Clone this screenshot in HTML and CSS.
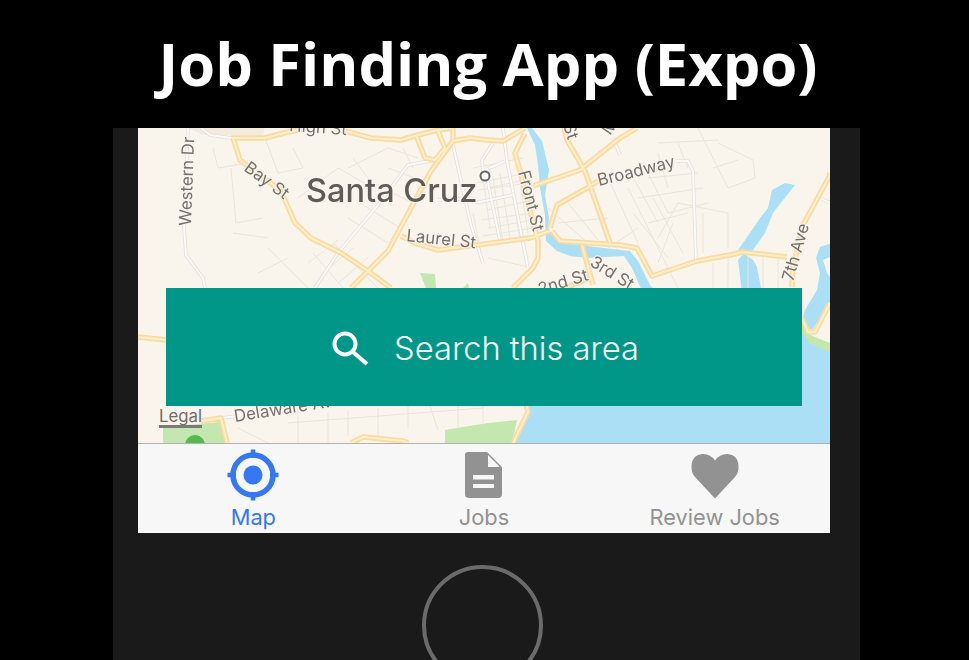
FILE: index.html
```html
<!DOCTYPE html>
<html lang="en">
<head>
<meta charset="utf-8">
<title>Job Finding App (Expo)</title>
<link rel="stylesheet" href="styles.css">
</head>
<body>
<header class="banner"><h1 class="banner-title">Job Finding App (Expo)</h1></header>
<main class="device">
  <section class="screen">
    <div class="map">
      <svg class="map-art" viewBox="0 0 692 315" width="692" height="315">
        <defs>
          <path id="major" d="M93 10L127 10L150 4L170 0M207 3L233 10L263 12L280 7L300 2L315 0M332 10L349 12L365 13L382 3L387 0M315 13L332 10M95 10L102 32L115 42L143 63L157 95L173 110L203 125L230 143L253 160M315 0L315 13L293 43L273 80L250 123L230 143L213 160M263 108L277 115L300 122L339 117L392 110L412 103M278 7L287 30L297 32L307 20L300 3M387 5L377 25L382 43L400 113L400 130L395 140L375 160M395 58L442 42L482 10L499 0M426 0L429 12L447 43L472 115M412 100L419 77L449 60L460 53M414 103L422 113L482 117L499 120L514 148L559 133L592 127L605 124L649 129M444 117L455 157M420 163L452 150M654 159L655 140L665 97L691 49L692 45M664 190L670 204L677 204L692 175M0 209L28 212M63 293L83 290L89 315M213 315L225 309L265 313L270 315M387 272L390 284L375 315"/>
          <path id="minor" d="M50 0L46 100L48 127L65 150L67 160M63 0L72 7L93 10M297 32L270 37L240 77L200 125L177 160M315 17L333 97L345 135M365 0L369 33L390 140M355 15L344 32L345 43L367 33M349 50L362 113M337 75L375 67M335 70L300 72M475 10L482 27M539 33L550 33L555 43L558 133M682 70L692 75M83 290L100 288"/>
          <path id="streets" d="M75 20L80 40L110 35M127 10L140 45L165 40L155 20M160 70L200 40L235 60M210 40L250 20L280 30M93 40L98 95L125 90M95 105L130 110M130 120L170 160M150 130L120 145M175 125L205 160M195 115L240 160M210 90L250 115M222 75L262 100M235 55L275 75M250 40L290 55M350 60L395 50M350 82L395 72M350 100L395 92M355 50L365 115M372 48L382 112M335 85L345 135M350 130L395 140M410 80L450 115M430 75L465 118M420 95L470 90M490 60L540 160M510 50L560 45M520 15L580 12M560 0L590 60M580 15L615 32L617 50L590 60M490 40L520 95M505 35L530 85M470 50L500 115M530 85L570 75M470 120L500 100M520 110L540 75L590 85L590 120M565 85L565 125M520 135L535 95M575 135L575 160M590 130L590 160M610 125L610 160M625 128L625 160M640 128L640 160M510 95L550 85M500 70L565 60M150 272L350 272M160 280L160 315M190 285L190 315M210 282L210 308M240 280L240 310M270 275L270 300M290 272L300 302M100 300L130 315M150 295L345 280M320 272L320 300M345 272L345 295M335 40L385 30M338 55L390 45M340 62L392 55M343 92L395 85M345 108L395 100M362 45L372 110M345 50L352 100M380 40L390 105M170 135L200 112M185 145L215 120M200 155L230 130M265 20L275 40M215 30L230 50M520 25L530 60M540 15L550 40M575 40L600 32M495 85L530 130M515 70L545 125"/>
        </defs>
        <polygon class="land" points="0,0 692,0 692,315 0,315"/>
        <polygon class="built" points="50,0 127,0 125,7 65,7"/>
        <g class="greens">
          <polygon points="25,299 82,294 87,315 25,315"/>
          <polygon points="307,302 350,295 379,292 374,315 307,315"/>
          <polygon points="282,145 297,146 298,160 288,160"/>
          <polygon points="330,155 331,160 325,160"/>
          <polygon points="664,192 672,207 692,215 692,227 672,217 664,207"/>
        </g>
        <circle class="poi" cx="57" cy="317" r="10"/>
        <g class="water">
          <polygon points="389,0 394,0 404,13 411,42 407,67 411,90 410,102 420,114 442,117 449,118 492,123 500,133 512,157 519,165 505,165 494,140 486,128 449,130 432,128 419,123 408,113 407,87 402,60 400,37 397,17"/>
          <polygon points="634,62 647,55 657,57 645,72 635,85 627,105 615,122 607,124 600,132 604,165 624,165 619,139 615,132 604,124 600,122 612,105 622,90 630,80"/>
          <polygon points="682,119 691,116 692,116 692,129 685,132 689,145 692,149 692,175 674,202 669,200 665,190 667,182 679,162 682,145 678,130"/>
          <polygon points="395,270 664,205 672,215 692,225 692,315 376,315 388,285"/>
        </g>
        <use class="street" href="#streets"/>
        <use class="minor-edge" href="#minor"/>
        <use class="minor-fill" href="#minor"/>
        <use class="major-edge" href="#major"/>
        <use class="major-fill" href="#major"/>
        <circle class="place-dot" cx="347" cy="48" r="4.500"/>
        <g class="labels">
          <text class="city" x="168" y="74">Santa Cruz</text>
          <text transform="translate(151 3) rotate(4)">High St</text>
          <text transform="translate(53 98) rotate(-88)">Western Dr</text>
          <text transform="translate(105 42) rotate(36)">Bay St</text>
          <text transform="translate(268 113) rotate(6)">Laurel St</text>
          <text transform="translate(461 58) rotate(-14)">Broadway</text>
          <text transform="translate(380 44) rotate(76)">Front St</text>
          <text transform="translate(451 137) rotate(32)">3rd St</text>
          <text transform="translate(402 167) rotate(-17)">2nd St</text>
          <text transform="translate(655 154) rotate(-74)">7th Ave</text>
          <text transform="translate(425 -3) rotate(72)">St</text>
          <text transform="translate(472 8) rotate(-55)">M</text>
          <text transform="translate(97 294) rotate(-9)">Delaware Ave</text>
        </g>
      </svg>
      <span class="legal">Legal</span>
      <button class="search-btn" type="button">
        <svg class="search-icon" viewBox="0 0 36 32" width="36" height="32"><circle cx="13" cy="12" r="10.500"/><path d="M21 20L35 32"/></svg>
        <span class="search-label">Search this area</span>
      </button>
    </div>
    <nav class="tabs">
      <div class="tab tab-active">
        <svg class="tab-icon" viewBox="0 0 54 48" width="54" height="48"><g class="target"><circle cx="27" cy="24" r="20"/><path class="ticks" d="M27 -1.500V7M27 41V49.500M1.500 24H10M44 24H52.500"/></g><circle class="target-dot" cx="27" cy="24" r="9.500"/></svg>
        <span class="tab-label">Map</span>
      </div>
      <div class="tab">
        <svg class="tab-icon" viewBox="0 0 54 48" width="54" height="48"><path class="solid" fill-rule="evenodd" d="M11 1H30L45 16V43Q45 47 41 47H12Q8 47 8 43V4Q8 1 11 1ZM31 4V16H43ZM16 24V28.500H37V24ZM16 33V37H37V33Z"/></svg>
        <span class="tab-label">Jobs</span>
      </div>
      <div class="tab">
        <svg class="tab-icon" viewBox="0 0 54 48" width="54" height="48"><path class="solid" d="M27 47.500L7 26Q3.500 22 3.500 16Q3.500 4 14.500 3Q22.500 2.800 27 9.500Q31.500 2.800 39.500 3Q50.500 4 50.500 16Q50.500 22 47 26Z"/></svg>
        <span class="tab-label">Review Jobs</span>
      </div>
    </nav>
  </section>
  <div class="home-area"><div class="home-button"></div></div>
</main>
</body>
</html>
```
FILE: styles.css
```css
* { box-sizing: border-box; }
html, body { margin: 0; height: 660px; overflow: hidden; background: #000; }
.banner { height: 128px; display: flex; align-items: center; justify-content: center; padding: 0 0 2px 7px; }
.banner-title { margin: 0; color: #fff; font: 700 59.600px/1 "Open Sans", sans-serif; }
.device { width: 747px; height: 532px; margin-left: 113px; padding: 0 30px 0 25px; background: #1a1a1a; overflow: hidden; }
.screen { width: 692px; }
.map { position: relative; height: 315px; padding: 160px 28px 37px; display: flex; overflow: hidden; background: #f9f5ed; }
.map-art { position: absolute; left: 0; top: 0; filter: blur(0.7px); }
.land { fill: #f9f5ed; }
.built { fill: #f4ebdc; }
.greens polygon { fill: #c3e7ae; }
.poi { fill: #55b94f; }
.water polygon { fill: #aadff5; }
.street, .minor-edge, .minor-fill, .major-edge, .major-fill { fill: none; stroke-linejoin: round; }
.street { stroke: #e9e5dd; stroke-width: 1; }
.minor-edge { stroke: #e3dfd9; stroke-width: 3.500; }
.minor-fill { stroke: #fbfaf8; stroke-width: 2; }
.major-edge { stroke: #f9dba2; stroke-width: 5.500; }
.major-fill { stroke: #fdeecb; stroke-width: 2; }
.place-dot { fill: #fff; stroke: #6a6763; stroke-width: 2; }
.labels text { font: 400 16.800px "Inter", sans-serif; fill: #74716c; stroke: #f9f5ed; stroke-width: 2px; paint-order: stroke; }
.labels .city { font-size: 32.500px; font-weight: 500; fill: #5f5c58; }
.legal { position: absolute; left: 21px; top: 279px; color: #6f6d69; font: 400 16.800px/18px "Inter", sans-serif; border-bottom: 3px solid #7b7a76; }
.search-btn { position: relative; flex: 1; display: flex; align-items: center; justify-content: center; gap: 26px; padding: 2px 0 0 3px; border: 0; background: #009688; color: #f2fbf9; font: 300 32.700px/1 "Inter", sans-serif; }
.search-icon { fill: none; stroke: #fff; stroke-width: 4; overflow: visible; }
.tabs { height: 90px; display: flex; background: #f7f7f7; border-top: 1px solid #b2b2b2; }
.tab { flex: 1; display: flex; flex-direction: column; align-items: center; padding-top: 7px; color: #929292; }
.tab-active { color: #3478f6; }
.tab-icon { display: block; overflow: visible; }
.target { fill: none; stroke: #3478f6; stroke-width: 5.500; }
.ticks { stroke-width: 4.500; }
.target-dot { fill: #3478f6; }
.solid { fill: #929292; }
.tab-label { margin-top: 5px; font: 400 21.800px/26px "Inter", sans-serif; }
.home-area { display: flex; justify-content: center; padding: 32px 4px 0 0; }
.home-button { width: 121px; height: 121px; flex: none; border: 4.500px solid #6b6b6b; border-radius: 50%; }
```
